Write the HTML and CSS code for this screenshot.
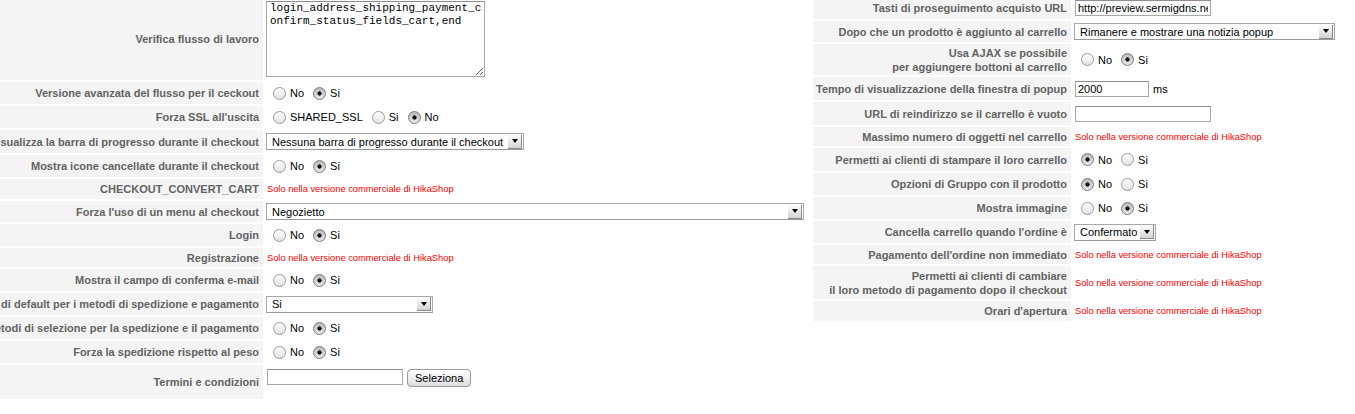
FILE: index.html
```html
<!DOCTYPE html>
<html lang="it">

<head>
  <meta charset="utf-8" />
  <title>Configurazione checkout</title>
  <link rel="stylesheet" href="styles.css">
</head>

<body>
  <main class="config">

    <!-- checkout -->
    <section class="panel panel-left">
      <div class="row h82">
        <div class="key"><span>Verifica flusso di lavoro</span></div>
        <div class="val">
          <textarea class="workflow" spellcheck="false">login_address_shipping_payment_confirm_status_fields_cart,end</textarea>
        </div>
      </div>
      <div class="row">
        <div class="key"><span>Versione avanzata del flusso per il ceckout</span></div>
        <div class="val choice">
          <input type="radio" name="adv" id="adv0"><label for="adv0">No</label>
          <input type="radio" name="adv" id="adv1" checked><label for="adv1">Si</label>
        </div>
      </div>
      <div class="row">
        <div class="key"><span>Forza SSL all'uscita</span></div>
        <div class="val choice">
          <input type="radio" name="ssl" id="ssl0"><label for="ssl0">SHARED_SSL</label>
          <input type="radio" name="ssl" id="ssl1"><label for="ssl1">Si</label>
          <input type="radio" name="ssl" id="ssl2" checked><label for="ssl2">No</label>
        </div>
      </div>
      <div class="row h23">
        <div class="key"><span>Visualizza la barra di progresso durante il checkout</span></div>
        <div class="val">
          <div class="select select-progress"><span class="select-text">Nessuna barra di progresso durante il checkout</span><span class="select-arrow"></span></div>
        </div>
      </div>
      <div class="row">
        <div class="key"><span>Mostra icone cancellate durante il checkout</span></div>
        <div class="val choice">
          <input type="radio" name="icons" id="icons0"><label for="icons0">No</label>
          <input type="radio" name="icons" id="icons1" checked><label for="icons1">Si</label>
        </div>
      </div>
      <div class="row h20">
        <div class="key"><span>CHECKOUT_CONVERT_CART</span></div>
        <div class="val"><span class="note">Solo nella versione commerciale di HikaShop</span></div>
      </div>
      <div class="row h21">
        <div class="key"><span>Forza l'uso di un menu al checkout</span></div>
        <div class="val">
          <div class="select select-menu"><span class="select-text">Negozietto</span><span class="select-arrow"></span></div>
        </div>
      </div>
      <div class="row">
        <div class="key"><span>Login</span></div>
        <div class="val choice">
          <input type="radio" name="login" id="login0"><label for="login0">No</label>
          <input type="radio" name="login" id="login1" checked><label for="login1">Si</label>
        </div>
      </div>
      <div class="row h19">
        <div class="key"><span>Registrazione</span></div>
        <div class="val"><span class="note">Solo nella versione commerciale di HikaShop</span></div>
      </div>
      <div class="row">
        <div class="key"><span>Mostra il campo di conferma e-mail</span></div>
        <div class="val choice">
          <input type="radio" name="mail" id="mail0"><label for="mail0">No</label>
          <input type="radio" name="mail" id="mail1" checked><label for="mail1">Si</label>
        </div>
      </div>
      <div class="row">
        <div class="key"><span>Valori di default per i metodi di spedizione e pagamento</span></div>
        <div class="val">
          <div class="select select-yes"><span class="select-text">Si</span><span class="select-arrow"></span></div>
        </div>
      </div>
      <div class="row">
        <div class="key"><span>Mostra i metodi di selezione per la spedizione e il pagamento</span></div>
        <div class="val choice">
          <input type="radio" name="methods" id="methods0"><label for="methods0">No</label>
          <input type="radio" name="methods" id="methods1" checked><label for="methods1">Si</label>
        </div>
      </div>
      <div class="row">
        <div class="key"><span>Forza la spedizione rispetto al peso</span></div>
        <div class="val choice">
          <input type="radio" name="weight" id="weight0"><label for="weight0">No</label>
          <input type="radio" name="weight" id="weight1" checked><label for="weight1">Si</label>
        </div>
      </div>
      <div class="row h34">
        <div class="key"><span>Termini e condizioni</span></div>
        <div class="val val-top">
          <input type="text" class="field field-terms">
          <button type="button" class="btn">Seleziona</button>
        </div>
      </div>
    </section>

    <!-- carrello -->
    <section class="panel panel-right">
      <div class="row">
        <div class="key"><span>Tasti di proseguimento acquisto URL</span></div>
        <div class="val">
          <input type="text" class="field field-url" value="http://preview.sermigdns.net/">
        </div>
      </div>
      <div class="row h21">
        <div class="key"><span>Dopo che un prodotto è aggiunto al carrello</span></div>
        <div class="val">
          <div class="select select-popup"><span class="select-text">Rimanere e mostrare una notizia popup</span><span class="select-arrow"></span></div>
        </div>
      </div>
      <div class="row h31">
        <div class="key"><span>Usa AJAX se possibile<br>per aggiungere bottoni al carrello</span></div>
        <div class="val choice">
          <input type="radio" name="ajax" id="ajax0"><label for="ajax0">No</label>
          <input type="radio" name="ajax" id="ajax1" checked><label for="ajax1">Si</label>
        </div>
      </div>
      <div class="row h23">
        <div class="key"><span>Tempo di visualizzazione della finestra di popup</span></div>
        <div class="val">
          <input type="text" class="field field-time" value="2000"><span class="unit">ms</span>
        </div>
      </div>
      <div class="row h23">
        <div class="key"><span>URL di reindirizzo se il carrello è vuoto</span></div>
        <div class="val">
          <input type="text" class="field field-url">
        </div>
      </div>
      <div class="row h19">
        <div class="key"><span>Massimo numero di oggetti nel carrello</span></div>
        <div class="val"><span class="note">Solo nella versione commerciale di HikaShop</span></div>
      </div>
      <div class="row h23">
        <div class="key"><span>Permetti ai clienti di stampare il loro carrello</span></div>
        <div class="val choice">
          <input type="radio" name="print" id="print0" checked><label for="print0">No</label>
          <input type="radio" name="print" id="print1"><label for="print1">Si</label>
        </div>
      </div>
      <div class="row">
        <div class="key"><span>Opzioni di Gruppo con il prodotto</span></div>
        <div class="val choice">
          <input type="radio" name="group" id="group0" checked><label for="group0">No</label>
          <input type="radio" name="group" id="group1"><label for="group1">Si</label>
        </div>
      </div>
      <div class="row">
        <div class="key"><span>Mostra immagine</span></div>
        <div class="val choice">
          <input type="radio" name="image" id="image0"><label for="image0">No</label>
          <input type="radio" name="image" id="image1" checked><label for="image1">Si</label>
        </div>
      </div>
      <div class="row">
        <div class="key"><span>Cancella carrello quando l'ordine è</span></div>
        <div class="val">
          <div class="select select-status"><span class="select-text">Confermato</span><span class="select-arrow"></span></div>
        </div>
      </div>
      <div class="row h19">
        <div class="key"><span>Pagamento dell'ordine non immediato</span></div>
        <div class="val"><span class="note">Solo nella versione commerciale di HikaShop</span></div>
      </div>
      <div class="row h33">
        <div class="key"><span>Permetti ai clienti di cambiare<br>il loro metodo di pagamento dopo il checkout</span></div>
        <div class="val"><span class="note">Solo nella versione commerciale di HikaShop</span></div>
      </div>
      <div class="row h20">
        <div class="key"><span>Orari d'apertura</span></div>
        <div class="val"><span class="note">Solo nella versione commerciale di HikaShop</span></div>
      </div>
    </section>

  </main>
</body>

</html>
```

FILE: styles.css
```css
html,
body {
  margin: 0;
  padding: 0;
  overflow: hidden;
  background: #fff;
  color: #000;
  font-family: 'Liberation Sans', Arial, sans-serif;
  font-size: 11px;
}

.config {
  display: flex;
  align-items: flex-start;
  gap: 2px;
}

.panel {
  display: flex;
  flex-direction: column;
  gap: 2px;
}

.panel-left {
  width: 811px;
  margin-top: -2px;
}

.panel-right {
  flex: 1;
  margin-top: -3px;
}

/* rows */
.row {
  display: flex;
  gap: 2px;
  height: 22px;
}

.h19 { height: 19px; }
.h20 { height: 20px; }
.h21 { height: 21px; }
.h23 { height: 23px; }
.h31 { height: 31px; }
.h33 { height: 33px; }
.h34 { height: 34px; }
.h82 { height: 82px; }

.key {
  flex: none;
  display: flex;
  justify-content: flex-end;
  align-items: center;
  width: 263px;
  padding-right: 4px;
  box-sizing: border-box;
  background: #f4f4f4;
  color: #636363;
  font-weight: bold;
  line-height: 14px;
  text-align: right;
  white-space: nowrap;
}

.panel-right .key {
  width: 258px;
}

.val {
  flex: 1;
  display: flex;
  align-items: center;
  min-width: 0;
  padding-left: 1px;
  white-space: nowrap;
}

.val-top {
  align-items: flex-start;
  padding-top: 4px;
}

.note {
  padding-left: 1px;
  color: #f00;
  font-size: 9.3px;
}

/* radio groups */
.choice input[type="radio"] {
  -webkit-appearance: none;
  appearance: none;
  flex: none;
  width: 13px;
  height: 13px;
  margin: 0 4px 0 7px;
  border: 1px solid #9a9a9a;
  border-radius: 50%;
  box-sizing: border-box;
  background: linear-gradient(#fff, #e2e2e2);
}

.choice input[type="radio"]:checked {
  border-color: #7a7a7a;
  background: radial-gradient(circle, #111 0, #111 1.8px, transparent 2.4px), linear-gradient(#b9b9b9, #e9e9e9);
}

.choice label {
  margin-right: 2px;
}

/* form fields */
.workflow {
  width: 219px;
  height: 76px;
  margin: 0;
  padding: 0 2px 0 3px;
  border: 1px solid #a9a9a9;
  border-top-color: #8e8e8e;
  box-sizing: border-box;
  font-family: 'Liberation Mono', 'Courier New', monospace;
  font-size: 11px;
  line-height: 13px;
  word-break: break-all;
  overflow: hidden;
  outline: none;
}

.field {
  height: 16px;
  margin: 0 0 0 1px;
  padding: 0 2px;
  border: 1px solid #a9a9a9;
  border-top-color: #8e8e8e;
  box-sizing: border-box;
  font-family: 'Liberation Sans', Arial, sans-serif;
  font-size: 11px;
  outline: none;
}

.field-terms { width: 136px; }
.field-url { width: 136px; }
.field-time { width: 74px; }

.unit {
  margin-left: 4px;
}

.btn {
  height: 18px;
  margin: 0 0 0 4px;
  padding: 0 7px;
  border: 1px solid #9a9a9a;
  border-radius: 4px;
  background: linear-gradient(#fff, #dedede);
  font-family: 'Liberation Sans', Arial, sans-serif;
  font-size: 11px;
  color: #000;
}

/* fake select boxes */
.select {
  display: flex;
  align-items: center;
  height: 17px;
  border: 1px solid #a8a8a8;
  border-bottom-color: #9a9a9a;
  box-sizing: border-box;
  background: #fff;
}

.select-text {
  flex: 1;
  overflow: hidden;
  padding-left: 5px;
}

.select-arrow {
  flex: none;
  display: flex;
  justify-content: center;
  align-items: center;
  width: 14px;
  height: 14px;
  margin-right: 1px;
  border-right: 1px solid #8a8a8a;
  border-bottom: 1px solid #8a8a8a;
  box-sizing: border-box;
  background: linear-gradient(#fdfdfd, #d4d4d4);
}

.select-arrow::after {
  content: '';
  border-left: 3.5px solid transparent;
  border-right: 3.5px solid transparent;
  border-top: 4px solid #000;
}

.select-progress { width: 258px; }
.select-menu { width: 538px; }
.select-yes { width: 167px; }
.select-popup { width: 261px; }
.select-status { width: 82px; }
```
